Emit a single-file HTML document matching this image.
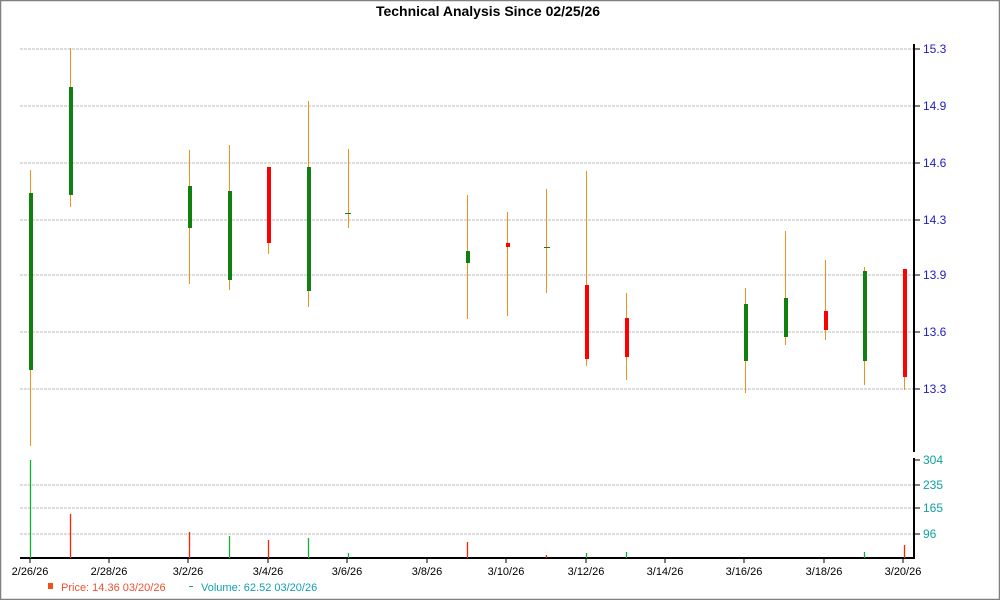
<!DOCTYPE html>
<html><head><style>
html,body{margin:0;padding:0;background:#fff;width:1000px;height:600px;overflow:hidden}
svg{display:block;font-family:"Liberation Sans",Arial,sans-serif}
</style></head><body>
<svg width="1000" height="600" viewBox="0 0 1000 600" xmlns="http://www.w3.org/2000/svg">
<rect x="0.5" y="0.5" width="999" height="599" fill="#fff" stroke="#808080" stroke-width="1.5"/>
<text x="488" y="16" text-anchor="middle" font-size="14" font-weight="bold" fill="#000">Technical Analysis Since 02/25/26</text>
<g stroke="#bbb" stroke-dasharray="3,1" stroke-width="1">
<line x1="20" y1="49" x2="914" y2="49"/><line x1="20" y1="106" x2="914" y2="106"/>
<line x1="20" y1="163" x2="914" y2="163"/><line x1="20" y1="220" x2="914" y2="220"/>
<line x1="20" y1="275" x2="914" y2="275"/><line x1="20" y1="332" x2="914" y2="332"/>
<line x1="20" y1="389" x2="914" y2="389"/>
<line x1="20" y1="485" x2="914" y2="485"/><line x1="20" y1="508" x2="914" y2="508"/>
<line x1="20" y1="534" x2="914" y2="534"/>
</g>
<g stroke="#000" stroke-width="2">
<line x1="914" y1="44" x2="914" y2="452"/>
<line x1="914" y1="458" x2="914" y2="559"/>
<line x1="20" y1="558" x2="915" y2="558"/>
</g>
<g stroke="#000" stroke-width="1">
<line x1="914" y1="49" x2="920" y2="49"/><line x1="914" y1="106" x2="920" y2="106"/>
<line x1="914" y1="163" x2="920" y2="163"/><line x1="914" y1="220" x2="920" y2="220"/>
<line x1="914" y1="275" x2="920" y2="275"/><line x1="914" y1="332" x2="920" y2="332"/>
<line x1="914" y1="389" x2="920" y2="389"/>
<line x1="914" y1="460" x2="920" y2="460"/><line x1="914" y1="485" x2="920" y2="485"/>
<line x1="914" y1="508" x2="920" y2="508"/><line x1="914" y1="534" x2="920" y2="534"/>
<line x1="30" y1="558" x2="30" y2="563"/><line x1="109" y1="558" x2="109" y2="563"/>
<line x1="188" y1="558" x2="188" y2="563"/><line x1="268" y1="558" x2="268" y2="563"/>
<line x1="347" y1="558" x2="347" y2="563"/><line x1="427" y1="558" x2="427" y2="563"/>
<line x1="506" y1="558" x2="506" y2="563"/><line x1="586" y1="558" x2="586" y2="563"/>
<line x1="665" y1="558" x2="665" y2="563"/><line x1="744" y1="558" x2="744" y2="563"/>
<line x1="824" y1="558" x2="824" y2="563"/><line x1="903" y1="558" x2="903" y2="563"/>
</g>
<g font-size="12" fill="#2020c0">
<text x="923" y="53">15.3</text><text x="923" y="110">14.9</text><text x="923" y="167">14.6</text>
<text x="923" y="224">14.3</text><text x="923" y="279">13.9</text><text x="923" y="336">13.6</text>
<text x="923" y="393">13.3</text>
</g>
<g font-size="12" fill="#10a0a0">
<text x="923" y="464">304</text><text x="923" y="489">235</text><text x="923" y="512">165</text><text x="923" y="538">96</text>
</g>
<g font-size="11" fill="#000" text-anchor="middle">
<text x="30" y="575">2/26/26</text><text x="109" y="575">2/28/26</text><text x="188" y="575">3/2/26</text>
<text x="268" y="575">3/4/26</text><text x="347" y="575">3/6/26</text><text x="427" y="575">3/8/26</text>
<text x="506" y="575">3/10/26</text><text x="586" y="575">3/12/26</text><text x="665" y="575">3/14/26</text>
<text x="744" y="575">3/16/26</text><text x="824" y="575">3/18/26</text><text x="903" y="575">3/20/26</text>
</g>
<g stroke="#f09020" stroke-width="1">
<line x1="30.5" y1="170" x2="30.5" y2="446"/><line x1="70.5" y1="48" x2="70.5" y2="207"/>
<line x1="189.5" y1="150" x2="189.5" y2="284"/><line x1="229.5" y1="145" x2="229.5" y2="290"/>
<line x1="268.5" y1="167" x2="268.5" y2="254"/><line x1="308.5" y1="101" x2="308.5" y2="307"/>
<line x1="348.5" y1="149" x2="348.5" y2="228"/><line x1="467.5" y1="195" x2="467.5" y2="319"/>
<line x1="507.5" y1="212" x2="507.5" y2="316"/><line x1="546.5" y1="189" x2="546.5" y2="293"/>
<line x1="586.5" y1="171" x2="586.5" y2="366"/><line x1="626.5" y1="293" x2="626.5" y2="380"/>
<line x1="745.5" y1="288" x2="745.5" y2="393"/><line x1="785.5" y1="231" x2="785.5" y2="345"/>
<line x1="825.5" y1="260" x2="825.5" y2="340"/><line x1="864.5" y1="267" x2="864.5" y2="385"/>
<line x1="904.5" y1="269" x2="904.5" y2="390"/>
</g>
<g fill="#108010">
<rect x="29" y="193" width="4" height="177"/><rect x="69" y="87" width="4" height="108"/>
<rect x="188" y="186" width="4" height="42"/><rect x="228" y="191" width="4" height="89"/>
<rect x="307" y="167" width="4" height="124"/><rect x="466" y="251" width="4" height="12"/>
<rect x="744" y="304" width="4" height="57"/><rect x="784" y="298" width="4" height="39"/>
<rect x="863" y="271" width="4" height="90"/>
<rect x="345" y="213" width="6" height="1"/><rect x="544" y="247" width="6" height="1"/>
</g>
<g fill="#ff0000">
<rect x="267" y="167" width="4" height="76"/><rect x="506" y="243" width="4" height="4"/>
<rect x="585" y="285" width="4" height="74"/><rect x="625" y="318" width="4" height="39"/>
<rect x="824" y="311" width="4" height="19"/><rect x="903" y="269" width="4" height="108"/>
</g>
<g stroke-width="1.3">
<line x1="30.5" y1="460" x2="30.5" y2="558" stroke="#10b030"/>
<line x1="70.5" y1="514" x2="70.5" y2="558" stroke="#ff2000"/>
<line x1="189.5" y1="532" x2="189.5" y2="558" stroke="#ff2000"/>
<line x1="229.5" y1="536" x2="229.5" y2="558" stroke="#10b030"/>
<line x1="268.5" y1="540" x2="268.5" y2="558" stroke="#ff2000"/>
<line x1="308.5" y1="538" x2="308.5" y2="558" stroke="#10b030"/>
<line x1="348.5" y1="553" x2="348.5" y2="558" stroke="#10b030"/>
<line x1="467.5" y1="542" x2="467.5" y2="558" stroke="#ff2000"/>
<line x1="546.5" y1="555" x2="546.5" y2="558" stroke="#ff2000"/>
<line x1="586.5" y1="553" x2="586.5" y2="558" stroke="#10b030"/>
<line x1="626.5" y1="552" x2="626.5" y2="558" stroke="#10b030"/>
<line x1="864.5" y1="552" x2="864.5" y2="558" stroke="#10b030"/>
<line x1="904.5" y1="545" x2="904.5" y2="558" stroke="#ff2000"/>
</g>
<rect x="48" y="583" width="5" height="6" fill="#f05020"/>
<text x="61" y="591" font-size="11" fill="#f05030">Price: 14.36  03/20/26</text>
<rect x="189" y="586" width="4" height="1" fill="#10a0a0"/>
<text x="201" y="591" font-size="11" fill="#10a0b0">Volume: 62.52  03/20/26</text>
</svg>
</body></html>
